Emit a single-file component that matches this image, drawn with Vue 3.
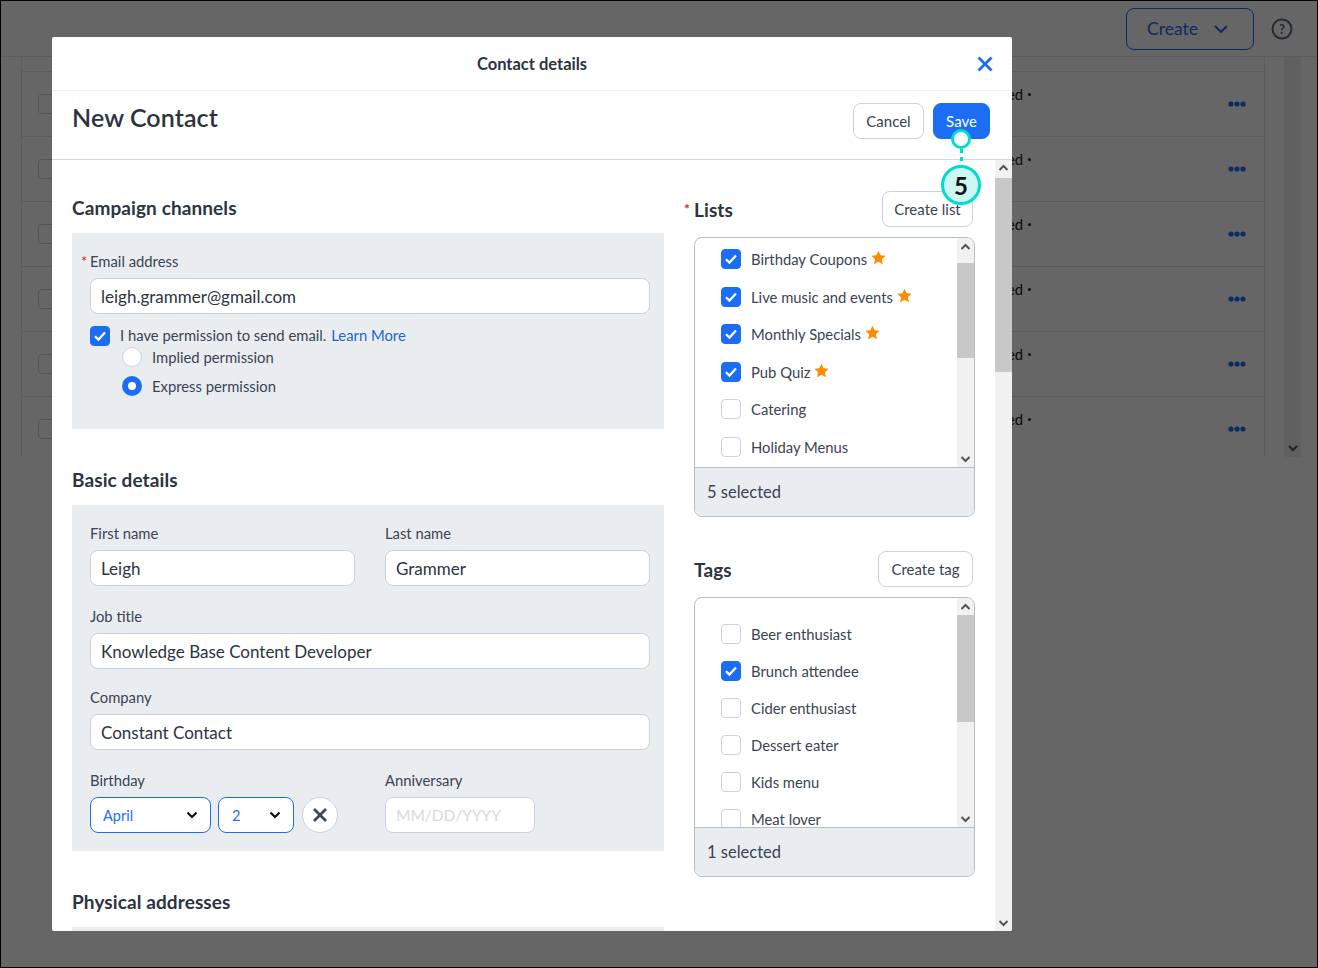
<script setup>
const bgRows = [1, 2, 3, 4, 5, 6]

const lists = [
  { name: 'Birthday Coupons', checked: true, star: true },
  { name: 'Live music and events', checked: true, star: true },
  { name: 'Monthly Specials', checked: true, star: true },
  { name: 'Pub Quiz', checked: true, star: true },
  { name: 'Catering', checked: false },
  { name: 'Holiday Menus', checked: false },
]

const tags = [
  { name: 'Beer enthusiast', checked: false },
  { name: 'Brunch attendee', checked: true },
  { name: 'Cider enthusiast', checked: false },
  { name: 'Dessert eater', checked: false },
  { name: 'Kids menu', checked: false },
  { name: 'Meat lover', checked: false },
]
</script>

<template>
  <div class="page">
    <!-- page behind the dialog -->
    <header class="top">
      <button class="create">
        Create
        <svg width="16" height="10" viewBox="0 0 16 10"><path d="M2 2l6 6 6-6" fill="none" stroke="#1b6ef3" stroke-width="2.2" /></svg>
      </button>
      <svg class="help" width="22" height="22" viewBox="0 0 22 22">
        <circle cx="11" cy="11" r="9.5" fill="none" stroke="#5b6b80" stroke-width="2" />
        <text x="11" y="15.5" text-anchor="middle" class="help-q">?</text>
      </svg>
    </header>
    <div class="bg-main">
      <div class="table">
        <div class="strip"></div>
        <div v-for="r in bgRows" :key="r" class="bg-row">
          <span class="bg-check"></span>
          <span class="bg-status">Subscribed<i class="bullet"></i></span>
          <svg class="dots" width="18" height="6" viewBox="0 0 18 6">
            <circle cx="3" cy="3" r="2.6" /><circle cx="9" cy="3" r="2.6" /><circle cx="15" cy="3" r="2.6" />
          </svg>
        </div>
      </div>
      <div class="bg-scroll">
        <svg width="10" height="7" viewBox="0 0 10 7"><path d="M1 1l4 4 4-4" fill="none" stroke="#555" stroke-width="2" /></svg>
      </div>
    </div>
    <div class="overlay"></div>

    <div class="modal">
      <div class="modal-top">
        <span>Contact details</span>
        <svg class="close" width="16" height="16" viewBox="0 0 16 16"><path d="M1.5 1.5l13 13M14.5 1.5l-13 13" stroke="#1b6ef3" stroke-width="2.8" fill="none" /></svg>
      </div>
      <div class="modal-sub">
        <h1>New Contact</h1>
        <div class="actions">
          <button class="btn cancel">Cancel</button>
          <button class="btn primary">Save</button>
        </div>
      </div>
      <div class="modal-body">
        <div class="content">
          <div class="left">
            <h2>Campaign channels</h2>
            <section class="panel campaign">
              <label class="lbl"><span class="req">*</span>Email address</label>
              <input class="input" value="leigh.grammer@gmail.com" />
              <div class="perm">
                <span class="check on">
                  <svg width="14" height="12" viewBox="0 0 14 12"><path d="M2 6.2l3.4 3.4L12 2.6" fill="none" stroke="#fff" stroke-width="2.2" /></svg>
                </span>
                <span class="perm-text">I have permission to send email.</span>
                <a class="link perm-text">Learn More</a>
              </div>
              <div class="radio-row"><span class="radio"></span>Implied permission</div>
              <div class="radio-row second"><span class="radio on"></span>Express permission</div>
            </section>

            <h2 class="next">Basic details</h2>
            <section class="panel basic">
              <div class="two">
                <div>
                  <label class="lbl">First name</label>
                  <input class="input" value="Leigh" />
                </div>
                <div>
                  <label class="lbl">Last name</label>
                  <input class="input" value="Grammer" />
                </div>
              </div>
              <div class="row-gap">
                <label class="lbl">Job title</label>
                <input class="input" value="Knowledge Base Content Developer" />
              </div>
              <div class="row-gap tight">
                <label class="lbl">Company</label>
                <input class="input" value="Constant Contact" />
              </div>
              <div class="two row-gap">
                <div>
                  <label class="lbl">Birthday</label>
                  <div class="dates">
                    <div class="select month">April
                      <svg width="12" height="8" viewBox="0 0 12 8"><path d="M1.5 1.5L6 6l4.5-4.5" fill="none" stroke="#111" stroke-width="2.2" /></svg>
                    </div>
                    <div class="select day">2
                      <svg width="12" height="8" viewBox="0 0 12 8"><path d="M1.5 1.5L6 6l4.5-4.5" fill="none" stroke="#111" stroke-width="2.2" /></svg>
                    </div>
                    <button class="clear">
                      <svg width="16" height="16" viewBox="0 0 16 16"><path d="M2 2l12 12M14 2L2 14" stroke="#3d4a5c" stroke-width="2.8" fill="none" /></svg>
                    </button>
                  </div>
                </div>
                <div>
                  <label class="lbl">Anniversary</label>
                  <input class="input anniv" placeholder="MM/DD/YYYY" />
                </div>
              </div>
            </section>

            <h2 class="next">Physical addresses</h2>
            <section class="panel"></section>
          </div>

          <div class="right">
            <div class="side-head">
              <h2><span class="req side">*</span>Lists</h2>
              <button class="btn create-list">Create list</button>
            </div>
            <div class="box">
              <div class="box-main">
                <div class="items lists">
                  <div v-for="item in lists" :key="item.name" class="item">
                    <span class="check" :class="{ on: item.checked }">
                      <svg v-if="item.checked" width="14" height="12" viewBox="0 0 14 12"><path d="M2 6.2l3.4 3.4L12 2.6" fill="none" stroke="#fff" stroke-width="2.2" /></svg>
                    </span>
                    <span>{{ item.name }}</span>
                    <svg v-if="item.star" class="star" width="15" height="15" viewBox="0 0 24 24"><path d="M12 1l3.4 7.4 8 .9-6 5.4 1.7 8L12 18.6l-7.1 4.1 1.7-8-6-5.4 8-.9z" fill="#ff8c00" /></svg>
                  </div>
                </div>
                <div class="vbar">
                  <svg class="arrow up" width="10" height="7" viewBox="0 0 10 7"><path d="M1 6l4-4 4 4" fill="none" stroke="#555" stroke-width="2" /></svg>
                  <div class="thumb" style="margin-top: 8px; height: 95px"></div>
                  <svg class="arrow down" width="10" height="7" viewBox="0 0 10 7"><path d="M1 1l4 4 4-4" fill="none" stroke="#555" stroke-width="2" /></svg>
                </div>
              </div>
              <div class="box-foot">5 selected</div>
            </div>

            <div class="side-head tags-head">
              <h2>Tags</h2>
              <button class="btn create-tag">Create tag</button>
            </div>
            <div class="box">
              <div class="box-main">
                <div class="items tags">
                  <div v-for="item in tags" :key="item.name" class="item">
                    <span class="check" :class="{ on: item.checked }">
                      <svg v-if="item.checked" width="14" height="12" viewBox="0 0 14 12"><path d="M2 6.2l3.4 3.4L12 2.6" fill="none" stroke="#fff" stroke-width="2.2" /></svg>
                    </span>
                    <span>{{ item.name }}</span>
                  </div>
                </div>
                <div class="vbar">
                  <svg class="arrow up" width="10" height="7" viewBox="0 0 10 7"><path d="M1 6l4-4 4 4" fill="none" stroke="#555" stroke-width="2" /></svg>
                  <div class="thumb" style="height: 107px"></div>
                  <svg class="arrow down" width="10" height="7" viewBox="0 0 10 7"><path d="M1 1l4 4 4-4" fill="none" stroke="#555" stroke-width="2" /></svg>
                </div>
              </div>
              <div class="box-foot">1 selected</div>
            </div>
          </div>
        </div>
        <div class="vbar main-bar">
          <svg class="arrow up" width="10" height="7" viewBox="0 0 10 7"><path d="M1 6l4-4 4 4" fill="none" stroke="#555" stroke-width="2" /></svg>
          <div class="thumb" style="height: 194px"></div>
          <svg class="arrow down" width="10" height="7" viewBox="0 0 10 7"><path d="M1 1l4 4 4-4" fill="none" stroke="#555" stroke-width="2" /></svg>
        </div>
      </div>
    </div>

    <!-- numbered callout -->
    <div class="callout">
      <span class="pin"></span>
      <span class="dash"></span>
      <span class="badge">5</span>
    </div>
  </div>
</template>

<style scoped>
* {
  box-sizing: border-box;
}

.page {
  position: relative;
  width: 1318px;
  height: 968px;
  overflow: hidden;
  background: #fff;
  border: 1px solid #000;
  font-family: Lato, "Open Sans", sans-serif;
  color: #3a4454;
  font-size: 14.8px;
}

.top {
  display: flex;
  justify-content: flex-end;
  align-items: center;
  height: 56px;
  padding-right: 24px;
  border-bottom: 1px solid #e2e5e8;
}

.create {
  display: flex;
  align-items: center;
  gap: 15px;
  width: 128px;
  height: 42px;
  padding: 0 0 0 20px;
  border: 1.5px solid #1b6ef3;
  border-radius: 8px;
  background: #fff;
  color: #1b6ef3;
  font: 17.5px Lato, sans-serif;
}

.help {
  margin-left: 17px;
}

.help-q {
  font: bold 13px Lato, sans-serif;
  fill: #5b6b80;
}

.bg-main {
  display: flex;
  height: 400px;
  padding-left: 20px;
}

.table {
  width: 1244px;
  border-left: 1px solid #dfe2e6;
  border-right: 1px solid #dfe2e6;
}

.strip {
  height: 14px;
}

.bg-row {
  display: flex;
  align-items: center;
  height: 65px;
  padding-left: 16px;
  border-top: 1px solid #dfe2e6;
}

.bg-check {
  width: 20px;
  height: 20px;
  border: 1px solid #c9d1e0;
  border-radius: 4px;
}

.bg-status {
  display: flex;
  align-items: center;
  margin-left: auto;
  margin-top: -20px;
  color: #222;
}

.bullet {
  width: 3px;
  height: 3px;
  margin-left: 5px;
  border-radius: 50%;
  background: #222;
}

.dots {
  margin-left: 197px;
  margin-right: 18px;
  fill: #1b6ef3;
}

.bg-scroll {
  display: flex;
  justify-content: center;
  align-items: flex-end;
  width: 17px;
  margin-left: 19px;
  padding-bottom: 5px;
  background: #f1f1f1;
}

.overlay {
  position: absolute;
  inset: 0;
  background: rgba(0, 0, 0, 0.6);
}

.modal {
  position: absolute;
  top: 36px;
  left: 51px;
  display: flex;
  flex-direction: column;
  width: 960px;
  height: 894px;
  overflow: hidden;
  background: #fff;
  border-radius: 2px;
}

.modal-top {
  position: relative;
  display: flex;
  justify-content: center;
  align-items: center;
  flex: none;
  height: 54px;
  border-bottom: 1px solid #eceef0;
  color: #2b3440;
  font-size: 16.5px;
  font-weight: 700;
}

.close {
  position: absolute;
  top: 19px;
  right: 19px;
}

.modal-sub {
  display: flex;
  justify-content: space-between;
  flex: none;
  height: 69px;
  padding: 12px 22px 0 21px;
  border-bottom: 1px solid #cfd6dc;
}

h1 {
  margin: -1px 0 0 -1px;
  color: #2b3440;
  font-size: 25px;
  font-weight: 600;
  letter-spacing: 0.1px;
  line-height: 30px;
}

.actions {
  display: flex;
  gap: 9px;
}

.btn {
  height: 36px;
  padding: 0;
  border: 1px solid #c9d1e0;
  border-radius: 8px;
  background: #fff;
  color: #3a4454;
  font: 15px Lato, sans-serif;
}

.cancel {
  width: 71px;
}

.create-list {
  width: 91px;
}

.create-tag {
  width: 95px;
}

.primary {
  width: 57px;
  border-color: #1b6ef3;
  background: #1b6ef3;
  color: #fff;
}

.modal-body {
  display: flex;
  flex: 1;
  min-height: 0;
}

.content {
  display: flex;
  flex: 1;
  min-width: 0;
  padding-left: 20px;
}

.left {
  flex: none;
  width: 592px;
}

h2 {
  height: 24px;
  margin: 36px 0 13px;
  color: #2b3440;
  font-size: 19px;
  font-weight: 700;
  letter-spacing: 0.1px;
  line-height: 24px;
}

h2.next {
  margin-top: 39px;
}

.panel {
  padding: 20px 14px 18px 18px;
  background: #e9edf0;
}

.campaign {
  height: 196px;
}

.basic {
  height: 346px;
}

.lbl {
  display: block;
  height: 17px;
  margin-bottom: 8px;
  line-height: 17px;
}

.req {
  display: inline-block;
  width: 9px;
  margin-left: -9px;
  color: #e0201b;
}

.input {
  display: block;
  width: 100%;
  height: 36px;
  padding: 0 10px;
  border: 1px solid #c9d1e0;
  border-radius: 8px;
  background: #fff;
  color: #2b3440;
  font: 17px Lato, sans-serif;
  outline: none;
}

.perm {
  display: flex;
  align-items: center;
  gap: 10px;
  height: 20px;
  margin-top: 12px;
}

.perm-text {
  margin-top: -2px;
}

.link {
  margin-left: -5px;
  color: #1c68c9;
}

.check {
  display: flex;
  justify-content: center;
  align-items: center;
  flex: none;
  width: 20px;
  height: 20px;
  border: 1px solid #c9d1e0;
  border-radius: 4px;
  background: #fff;
}

.check.on {
  border-color: #1b6ef3;
  background: #1b6ef3;
}

.radio-row {
  display: flex;
  align-items: center;
  gap: 10px;
  height: 20px;
  margin: 1px 0 0 32px;
}

.radio-row.second {
  margin-top: 9px;
}

.radio {
  width: 20px;
  height: 20px;
  border: 1px solid #c9d1e0;
  border-radius: 50%;
  background: #fff;
}

.radio.on {
  border: 6px solid #1b6ef3;
}

.two {
  display: grid;
  grid-template-columns: 265px 265px;
  gap: 30px;
}

.row-gap {
  margin-top: 22px;
}

.row-gap.tight {
  margin-top: 20px;
}

.dates {
  display: flex;
  gap: 7px;
}

.select {
  display: flex;
  justify-content: space-between;
  align-items: center;
  height: 36px;
  padding: 0 12px;
  border: 1px solid #1b6ef3;
  border-radius: 8px;
  background: #fff;
  color: #1b6ef3;
  font-size: 14.5px;
}

.month {
  width: 121px;
}

.day {
  width: 76px;
  padding-left: 13px;
}

.clear {
  display: flex;
  justify-content: center;
  align-items: center;
  width: 36px;
  height: 36px;
  margin-left: 1px;
  padding: 0;
  border: 1px solid #c9d1e0;
  border-radius: 50%;
  background: #fff;
}

.anniv {
  width: 150px;
  font-size: 15.5px;
}

.anniv::placeholder {
  color: #d3dae0;
}

.right {
  flex: none;
  width: 291px;
  margin-left: 20px;
}

.side-head {
  display: flex;
  justify-content: space-between;
  align-items: center;
  height: 36px;
  margin: 31px 2px 10px 0;
}

.side-head h2 {
  margin: -1px 0 0;
}

.tags-head {
  margin-top: 34px;
  padding-left: 10px;
}

.tags-head h2 {
  margin-top: 1px;
}

.req.side {
  width: 10px;
  margin-left: 0;
  font-size: 14px;
  vertical-align: 3px;
}

.box {
  width: 281px;
  height: 280px;
  margin-left: 10px;
  overflow: hidden;
  border: 1px solid #b3c0c8;
  border-radius: 8px;
}

.box-main {
  display: flex;
  height: 229px;
}

.items {
  flex: 1;
  min-width: 0;
  overflow: hidden;
  padding-left: 26px;
}

.items.lists {
  padding-top: 2.5px;
}

.items.lists .item {
  height: 37.5px;
}

.items.tags {
  padding-top: 17.5px;
}

.items.tags .item {
  height: 37px;
}

.item {
  display: flex;
  align-items: center;
  gap: 10px;
}

.star {
  margin: -3px 0 0 -6px;
}

.vbar {
  display: flex;
  flex-direction: column;
  align-items: stretch;
  flex: none;
  width: 17px;
  background: #f1f1f1;
}

.thumb {
  background: #c8c8c8;
}

.arrow {
  flex: none;
  align-self: center;
  transform: translateX(-0.5px);
}

.arrow.up {
  margin: 5px 0;
}

.arrow.down {
  margin: auto 0 4px;
}

.main-bar {
  height: 771px;
}

.main-bar .arrow.up {
  margin: 4px 0 7px;
}

.box-foot {
  height: 49px;
  padding-left: 12px;
  border-top: 1px solid #b3c0c8;
  background: #e9edf0;
  font-size: 16.5px;
  line-height: 49px;
}

.callout {
  position: absolute;
  top: 128px;
  left: 940px;
  display: flex;
  flex-direction: column;
  align-items: center;
  width: 40px;
}

.pin {
  width: 20px;
  height: 20px;
  border: 3px solid #00dccf;
  border-radius: 50%;
  background: #fff;
}

.dash {
  width: 3px;
  height: 16px;
  background: repeating-linear-gradient(#00dccf 0 4px, transparent 4px 8px);
}

.badge {
  display: flex;
  justify-content: center;
  align-items: center;
  width: 40px;
  height: 40px;
  border: 3px solid #00dccf;
  border-radius: 50%;
  background: #cdf7f3;
  color: #111;
  font-size: 24px;
  font-weight: 700;
}
</style>
